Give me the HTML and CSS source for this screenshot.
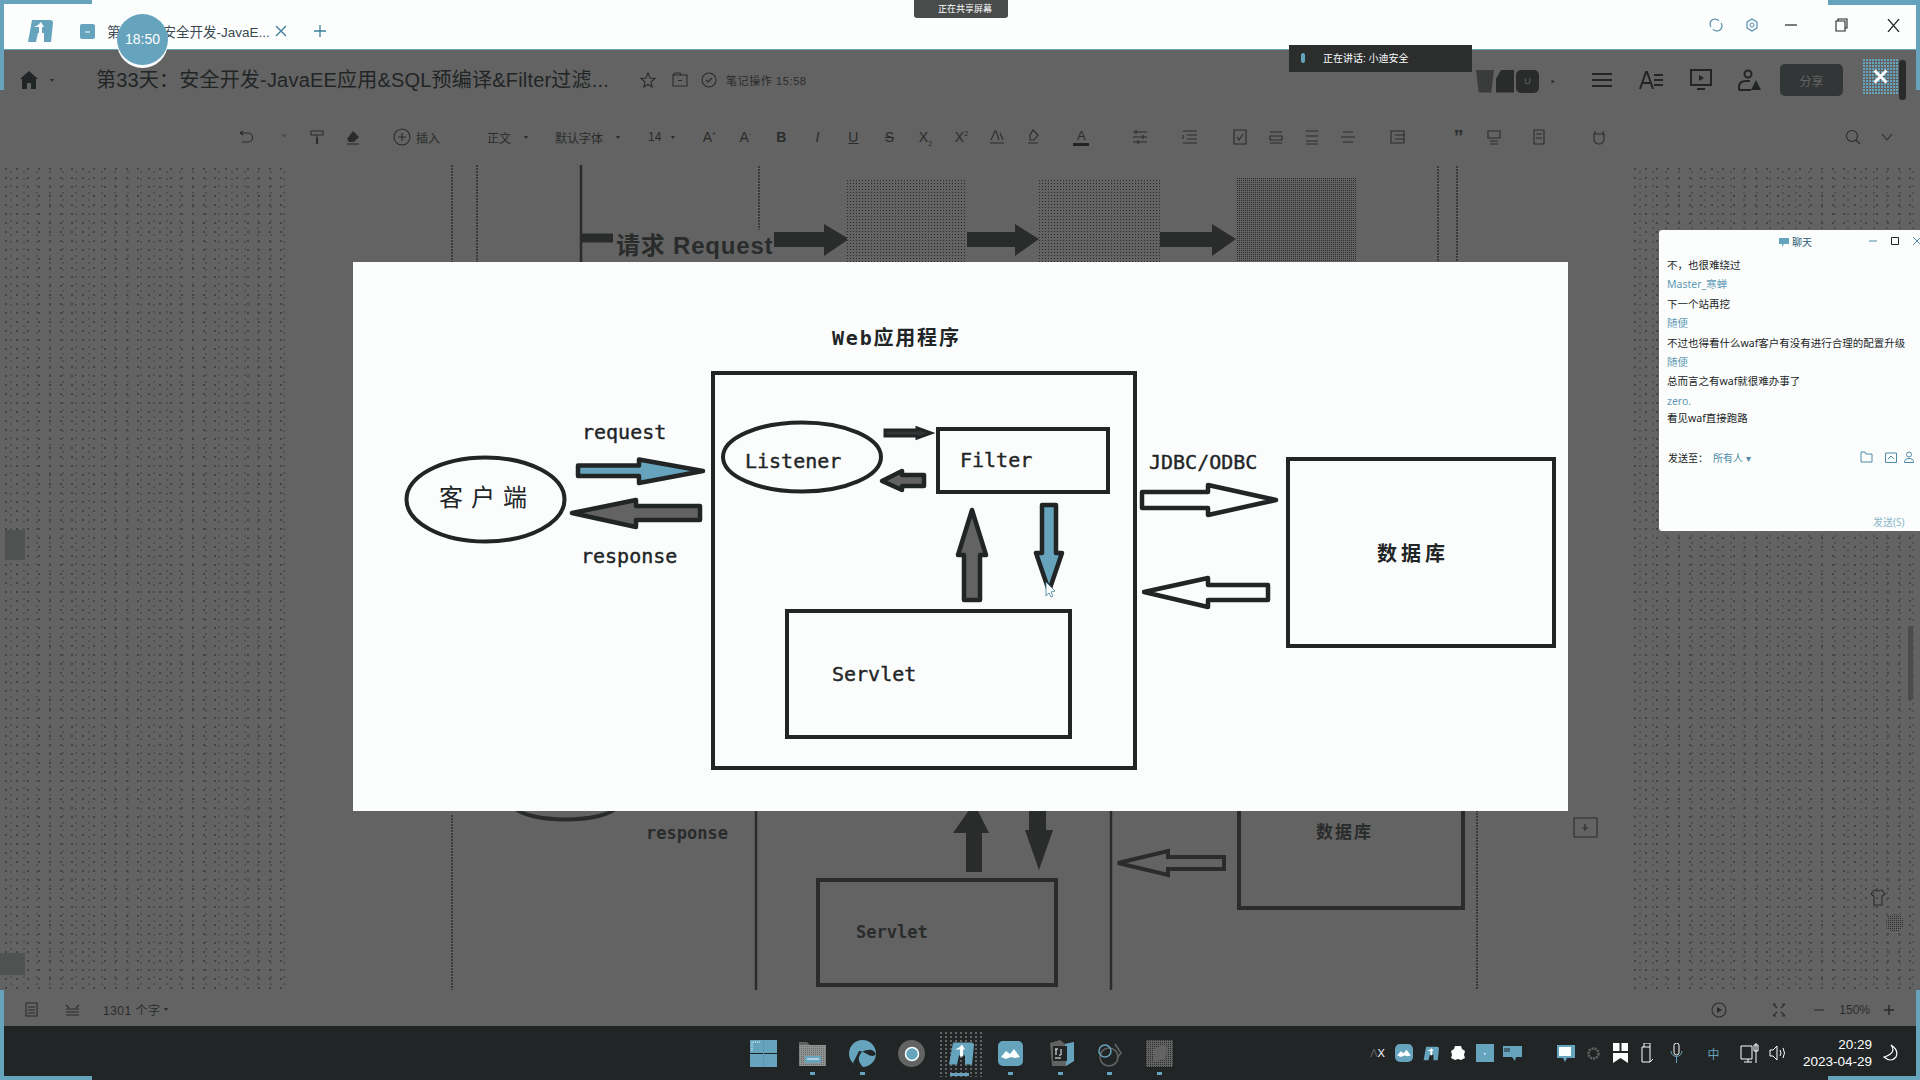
FILE: index.html
```html
<!DOCTYPE html>
<html lang="zh-CN">
<head>
<meta charset="utf-8">
<title>第33天：安全开发-JavaEE应用&amp;SQL预编译&amp;Filter过滤器</title>
<link rel="stylesheet" href="styles.css">
</head>
<body>
<svg class="defs" width="0" height="0">
  <defs>
    <symbol id="logo" viewBox="0 0 26 24">
      <path d="M5 1h18q3 0 3 3l-2 19h-7v-9h-6l-2 9H1z" fill="#66a3bd"/>
      <path d="M14 3l3 5h-2v7h-3V8H7l4-2z" fill="#fcfefe"/>
    </symbol>
    <pattern id="dith1" width="3" height="3" patternUnits="userSpaceOnUse"><rect width="3" height="3" fill="#636363"/><rect width="1" height="1" fill="#2a2c2c"/></pattern>
    <pattern id="dith2" width="2" height="2" patternUnits="userSpaceOnUse"><rect width="2" height="2" fill="#636363"/><rect width="1" height="1" fill="#2a2c2c"/></pattern>
  </defs>
</svg>
<div class="screen">
  <header class="tabbar">
    <div class="tab-group">
      <svg class="tab-logo" width="26" height="24"><use href="#logo"/></svg>
      <svg class="tab-doc" width="16" height="16" viewBox="0 0 16 16"><rect width="15" height="15" y="1" rx="2" fill="#66a3bd"/><path d="M5 9h5" stroke="#fcfefe"/></svg>
      <span class="tab-name">第33天：安全开发-JavaE...</span>
      <svg class="tab-x" width="12" height="12" viewBox="0 0 12 12"><path d="M1 1l10 10M11 1L1 11" stroke="#3f7f9b" stroke-width="1.4"/></svg>
      <svg class="tab-plus" width="12" height="12" viewBox="0 0 12 12"><path d="M6 0v12M0 6h12" stroke="#3f7f9b" stroke-width="1.3"/></svg>
    </div>
    <div class="win-ctl">
      <svg width="14" height="14" viewBox="0 0 14 14"><path d="M2 9a5 5 0 0 1 8-6M12 5a5 5 0 0 1-8 6" fill="none" stroke="#4f8ba6" stroke-width="1.2"/></svg>
      <svg width="14" height="14" viewBox="0 0 14 14"><path d="M7 1l5 3v6l-5 3-5-3V4z" fill="none" stroke="#4f8ba6" stroke-width="1.2"/><circle cx="7" cy="7" r="2" fill="none" stroke="#4f8ba6"/></svg>
      <svg class="wc-min" width="12" height="12" viewBox="0 0 12 12"><path d="M0 6h12" stroke="#222526" stroke-width="1.2"/></svg>
      <svg class="wc-max" width="13" height="14" viewBox="0 0 13 14"><path d="M1 3h9v10H1zM3 3V1h9v9h-2" fill="none" stroke="#222526" stroke-width="1.1"/></svg>
      <svg class="wc-close" width="13" height="13" viewBox="0 0 13 13"><path d="M1 0l11 13M12 0L1 13" stroke="#222526" stroke-width="1.2"/></svg>
    </div>
  </header>

  <div class="titlebar">
    <svg class="home" width="20" height="20" viewBox="0 0 20 20"><path d="M10 1l9 8h-2v10h-5v-6H8v6H3V9H1z" fill="#222526"/></svg>
    <i class="caret home-caret"></i>
    <h1 class="doc-title">第33天：安全开发-JavaEE应用&amp;SQL预编译&amp;Filter过滤...</h1>
    <svg class="t-ic first" width="18" height="18" viewBox="0 0 18 18"><path d="M9 2l2 5 5 .5-4 3.500 1.200 5L9 13.500 4.800 16l1.200-5-4-3.500L7 7z" class="ol"/></svg>
    <svg class="t-ic" width="18" height="18" viewBox="0 0 18 18"><path d="M2 4h14v11H2zM2 4l2-2h5l1 2M7 9.500h4" class="ol"/></svg>
    <svg class="t-ic t-ic3" width="18" height="18" viewBox="0 0 18 18"><circle cx="9" cy="9" r="7" class="ol"/><path d="M6 9l2 2 4-4" class="ol"/></svg>
    <span class="saved">笔记操作 15:58</span>
    <div class="avatars">
      <span class="av av1"></span><span class="av av2"></span><span class="av av3">U</span>
      <i class="caret av-caret"></i>
    </div>
    <svg class="menu-ic" width="20" height="16" viewBox="0 0 20 16"><path d="M0 2h20M0 8h20M0 14h20" stroke="#222526" stroke-width="2"/></svg>
    <svg class="ae-ic" width="24" height="20" viewBox="0 0 24 20"><path d="M1 19L7 2h1l6 17M4 13h8" fill="none" stroke="#222526" stroke-width="2"/><path d="M15 5h9M15 10h9M15 15h9" stroke="#222526" stroke-width="2"/></svg>
    <svg class="pres-ic" width="22" height="22" viewBox="0 0 22 22"><path d="M1 1h20v15H1zM7 20h8" fill="none" stroke="#222526" stroke-width="2"/><path d="M9 6l5 3-5 3z" fill="#222526"/></svg>
    <svg class="user-ic" width="24" height="22" viewBox="0 0 24 22"><circle cx="10" cy="5" r="3.500" fill="none" stroke="#222526" stroke-width="2"/><path d="M1 21v-3q0-6 7-6h4" fill="none" stroke="#222526" stroke-width="2"/><path d="M1 21h12" stroke="#222526" stroke-width="2"/><path d="M18 11l5 10h-10z" fill="#222526"/></svg>
    <button class="share-btn">分享</button>
  </div>

  <div class="fmtbar">
    <svg class="f first" viewBox="0 0 16 16"><path d="M3 4h8a3 3 0 0 1 0 9H5M3 4l3-2M3 4l3 2" class="ol"/></svg>
    <svg class="f" viewBox="0 0 16 16"><path d="M13 6h-4M13 6l-2 2" class="ol faint"/></svg>
    <svg class="f" viewBox="0 0 16 16"><path d="M2 2h12v4H2zM8 6v8" class="ol"/><path d="M7 9h2v6H7z" fill="#2a2c2c"/></svg>
    <svg class="f" viewBox="0 0 16 16"><path d="M8 2l6 6-5 5H4l-2-3z" fill="#2a2c2c"/><path d="M2 15h12" class="ol"/></svg>
    <span class="f-insert">
      <svg width="18" height="18" viewBox="0 0 18 18"><circle cx="9" cy="9" r="8" class="ol"/><path d="M9 5v8M5 9h8" class="ol"/></svg>
      <span>插入</span>
    </span>
    <span class="f-txt t-style">正文</span><i class="caret c-style"></i>
    <span class="f-txt t-font">默认字体</span><i class="caret c-font"></i>
    <span class="f-txt t-size">14</span><i class="caret c-size"></i>
    <span class="f-glyph g-a">A<sup>+</sup></span>
    <span class="f-glyph">A<sup>-</sup></span>
    <span class="f-glyph bold">B</span>
    <span class="f-glyph ital">I</span>
    <span class="f-glyph und">U</span>
    <span class="f-glyph strk">S</span>
    <span class="f-glyph">X<sub>2</sub></span>
    <span class="f-glyph">X<sup>2</sup></span>
    <svg class="f" viewBox="0 0 16 16"><path d="M2 11L6 2h1l3 9M11 4l3 7M1 14h14" class="ol"/></svg>
    <svg class="f" viewBox="0 0 16 16"><path d="M8 1l5 5-4 5H5V6zM3 14h10" class="ol"/></svg>
    <span class="f-colour">A<b></b></span>
    <svg class="f f-list" viewBox="0 0 16 16"><path d="M1 3h14M1 8h14M1 13h14M4 1v4M11 6v4M6 11v4" class="ol"/></svg>
    <svg class="f f-list2" viewBox="0 0 16 16"><path d="M1 2h14M5 6h10M5 10h10M1 14h14M1 6v4" class="ol"/></svg>
    <svg class="f f-check" viewBox="0 0 16 16"><path d="M2 1h12v14H2zM5 8l2 3 4-6" class="ol"/></svg>
    <svg class="f" viewBox="0 0 16 16"><path d="M2 3h12M2 7h12v4H2zM2 14h12" class="ol"/></svg>
    <svg class="f" viewBox="0 0 16 16"><path d="M2 2h12M2 7h12M2 12h12M2 15h12" class="ol"/></svg>
    <svg class="f" viewBox="0 0 16 16"><path d="M3 3h10M1 8h14M3 13h10" class="ol"/></svg>
    <svg class="f f-list3" viewBox="0 0 16 16"><path d="M1 2h13v12H1zM5 6h9M5 10h9" class="ol"/></svg>
    <span class="f-glyph f-quote">”</span>
    <svg class="f" viewBox="0 0 16 16"><path d="M2 2h12v7H2zM4 12h8M4 15h8" class="ol"/></svg>
    <svg class="f f-phone" viewBox="0 0 16 16"><path d="M3 1h10v14H3zM5 5h6M5 9h6" class="ol"/></svg>
    <svg class="f f-plug" viewBox="0 0 16 16"><path d="M4 2v3M12 2v3M3 5h10v5a5 5 0 0 1-10 0z" class="ol"/></svg>
    <svg class="f f-search" viewBox="0 0 16 16"><circle cx="7" cy="7" r="5.500" class="ol"/><path d="M11 11l4 4" class="ol"/></svg>
    <svg class="f f-chev" viewBox="0 0 16 16"><path d="M3 5l5 6 5-6" class="ol"/></svg>
  </div>

  <main class="doc">
    <aside class="margin"></aside>
    <svg class="page" width="1343" height="825" viewBox="290 165 1343 825">
      <g class="bg-line">
        <path d="M451 165v97M476 165v97M758 163v67M1437 163v99M1456 163v99M451 815v175M1476 810v180"/>
      </g>
      <g class="bg-line thick">
        <path d="M580 165v97M755 810v180M1110 810v180"/>
      </g>
      <path d="M580 238h32" class="bg-bar"/>
      <text x="615" y="254" class="bg-req">请求 Request</text>
      <path d="M773 232h50v-8l25 15-25 17v-9h-50z" class="bg-arrow"/>
      <path d="M966 232h48v-8l24 15-24 17v-9h-48z" class="bg-arrow"/>
      <path d="M1158 232h53v-8l24 15-24 17v-9h-53z" class="bg-arrow"/>
      <rect x="846" y="178" width="120" height="84" fill="url(#dith1)"/>
      <rect x="1038" y="178" width="121" height="84" fill="url(#dith1)"/>
      <rect x="1235" y="178" width="121" height="84" fill="url(#dith2)"/>
      <path d="M514 808a52 15 0 0 0 101 0" fill="none" stroke="#2a2c2c" stroke-width="4"/>
      <text x="645" y="839" class="bg-mono">response</text>
      <path d="M965 872V833h-13l21-30 15 30h-7v39z" fill="#2a2c2c"/>
      <path d="M1028 808h17v22h7l-14 40-14-40h4z" fill="#2a2c2c"/>
      <rect x="817" y="880" width="238" height="105" class="bg-box"/>
      <text x="855" y="938" class="bg-mono">Servlet</text>
      <path d="M1117 863l50-12v6h56v12h-56v6z" class="bg-outline"/>
      <path d="M1238 808v100h224v-100" class="bg-outline thick-out"/>
      <text x="1315" y="838" class="bg-cjk">数据库</text>
      <path d="M1573 818h23v19h-23zM1584 824v7M1581 828h6" class="ol"/>
    </svg>
    <aside class="margin right"></aside>
  </main>

  <footer class="status">
    <svg class="s-ic" width="13" height="15" viewBox="0 0 13 15"><path d="M1 1h11v13H1zM3 5h7M3 8h7M3 11h7" class="ol"/></svg>
    <svg class="s-ic s-ic2" width="15" height="13" viewBox="0 0 15 13"><path d="M1 2l3 3M14 2l-3 3M1 6h13M1 9h13M1 12h13" class="ol"/></svg>
    <span class="s-count">1301 个字</span><i class="caret c-count"></i>
    <div class="s-right">
      <svg width="16" height="16" viewBox="0 0 16 16"><circle cx="8" cy="8" r="7" class="ol"/><path d="M6 5l5 3-5 3z" fill="#2a2c2c"/></svg>
      <svg class="s-full" width="14" height="14" viewBox="0 0 14 14"><path d="M1 1l4 4M13 1L9 5M1 13l4-4M13 13L9 9M1 1h3M13 1h-3M1 13h3M13 13h-3" class="ol"/></svg>
      <svg class="s-minus" width="10" height="4" viewBox="0 0 10 4"><path d="M0 2h10" class="ol"/></svg>
      <span class="s-zoom">150%</span>
      <svg class="s-plus" width="10" height="10" viewBox="0 0 10 10"><path d="M5 0v10M0 5h10" stroke="#2a2c2c" stroke-width="1.500"/></svg>
    </div>
  </footer>

  <nav class="taskbar">
    <div class="apps">
      <span class="app"><svg width="27" height="27" viewBox="0 0 27 27"><path d="M0 0h27v27H0z" fill="#66a3bd"/><path d="M0 13.500h27" stroke="#222526"/><path d="M13.500 0v27" stroke="#5b97b0"/><path d="M2 11V2h9" fill="none" stroke="#fcfefe" stroke-dasharray="1 1"/></svg></span>
      <span class="app dot"><svg width="27" height="27" viewBox="0 0 27 27"><path d="M0 2h8l3 3h16v21H0z" fill="#636363"/><path d="M0 5h27v21H0z" fill="#fcfefe"/><path d="M0 5h27v21H0z" fill="url(#dith2)" opacity=".7"/><rect x="6" y="16" width="16" height="7" fill="#66a3bd"/><path d="M8 19h12" stroke="#fcfefe"/></svg></span>
      <span class="app dot"><svg width="27" height="27" viewBox="0 0 27 27"><circle cx="13.500" cy="13.500" r="13.500" fill="#66a3bd"/><path d="M27 14q-3-5-8-4-7 0-9 7-1 5 4 10-6 1-10-4l6-12q3 0 8 3 6 4 9 0z" fill="#222526"/></svg></span>
      <span class="app"><svg width="27" height="27" viewBox="0 0 27 27"><circle cx="13.500" cy="13.500" r="13.500" fill="#636363"/><circle cx="14" cy="14" r="6.500" fill="#66a3bd" stroke="#fcfefe" stroke-width="1.500"/></svg></span>
      <span class="app active"><svg width="26" height="25"><use href="#logo"/></svg></span>
      <span class="app dot"><svg width="25" height="25" viewBox="0 0 25 25"><rect width="25" height="25" rx="5" fill="#66a3bd"/><path d="M3 16l5-6 4 3 4-5 6 8-5 1-4-1-5 2z" fill="#fcfefe"/></svg></span>
      <span class="app dot"><svg width="27" height="27" viewBox="0 0 27 27"><path d="M3 3l10-3 5 4 9-2v19l-8 5H5z" fill="#636363"/><path d="M18 4l9-2v19l-8 5z" fill="#66a3bd"/><rect x="6" y="6" width="14" height="15" fill="#222526"/><path d="M8 9h3M14 9v6h-2M9 9v6M8 18h6" stroke="#fcfefe"/></svg></span>
      <span class="app dot"><svg width="25" height="26" viewBox="0 0 25 26"><circle cx="12" cy="16" r="9" fill="none" stroke="#636363" stroke-width="1.500"/><circle cx="8" cy="10" r="6" fill="none" stroke="#66a3bd" stroke-width="1.500"/><path d="M18 3l6 9-4 5" fill="none" stroke="#636363" stroke-width="1.500"/></svg></span>
      <span class="app dot"><svg width="27" height="27" viewBox="0 0 27 27"><rect width="27" height="27" fill="url(#dith2)"/><path d="M8 9l10-5 3 4-1 10-12 4z" fill="#636363"/></svg></span>
    </div>
    <div class="tray">
      <span class="tray-ax"><em>Λ</em>X</span>
      <span class="tr"><svg width="18" height="18" viewBox="0 0 25 25"><rect width="25" height="25" rx="7" fill="#66a3bd"/><path d="M3 16l5-6 4 3 4-5 6 8-5 1-4-1-5 2z" fill="#fcfefe"/></svg></span>
      <span class="tr"><svg width="16" height="17"><use href="#logo"/></svg></span>
      <span class="tr"><svg width="16" height="16" viewBox="0 0 16 16"><path d="M5 1h6l1 3 3 2-1 4 1 3-4 2-3-1-3 1-4-2 1-3-1-4 3-2z" fill="#fcfefe"/></svg></span>
      <span class="tr"><svg width="18" height="18" viewBox="0 0 18 18"><rect width="18" height="18" fill="#66a3bd"/><rect x="8" y="9" width="1.500" height="1.500" fill="#fcfefe"/></svg></span>
      <span class="tr"><svg width="19" height="15" viewBox="0 0 19 15"><path d="M0 0h19v11h-6l-1 4-3-4H0z" fill="#66a3bd"/><path d="M2 2v4M4 2v4M6 2v4" stroke="#222526"/></svg></span>
      <span class="tr tr-gap"><svg width="18" height="17" viewBox="0 0 18 17"><path d="M0 0h18v13h-8l-2 4-2-4H0z" fill="#66a3bd"/><rect x="2" y="2" width="12" height="9" fill="#fcfefe"/></svg></span>
      <span class="tr"><svg width="13" height="13" viewBox="0 0 13 13"><circle cx="6.500" cy="6.500" r="5" fill="none" stroke="#636363" stroke-width="2.500" stroke-dasharray="2 1"/></svg></span>
      <span class="tr"><svg width="15" height="20" viewBox="0 0 15 20"><path d="M0 0h6.500v8H0zM8.500 0H15v8H8.500zM0 10h15v10l-7.500-5L0 20z" fill="#fcfefe"/></svg></span>
      <span class="tr"><svg width="13" height="20" viewBox="0 0 13 20"><path d="M3 4V0h6v4M1 4h8v15H1zM9 19l3-3" fill="none" stroke="#fcfefe"/></svg></span>
      <span class="tr tr-w30"><svg width="13" height="20" viewBox="0 0 13 20"><rect x="4" y="0" width="5" height="12" rx="2.500" fill="none" stroke="#fcfefe"/><path d="M1 8a5.500 5.500 0 0 0 11 0M6.500 14v6" fill="none" stroke="#66a3bd"/></svg></span>
      <span class="tr tr-ime">中</span>
      <span class="tr tr-w35"><svg width="20" height="20" viewBox="0 0 20 20"><path d="M1 3h11v13H1zM4 19h8M8 16v3M16 0v20M14 2h4v6h-4z" fill="none" stroke="#fcfefe"/></svg></span>
      <span class="tr tr-vol"><svg width="18" height="16" viewBox="0 0 18 16"><path d="M1 5h3l4-4v14l-4-4H1z" fill="none" stroke="#fcfefe"/><path d="M11 5q2 3 0 6M14 3q3 5 0 10" fill="none" stroke="#fcfefe"/></svg></span>
      <div class="clock"><span>20:29</span><span>2023-04-29</span></div>
      <svg class="moon" width="15" height="18" viewBox="0 0 15 18"><path d="M8 1q6 8-7 12 7 6 12 0 3-7-5-12z" fill="none" stroke="#fcfefe" stroke-width="1.200"/></svg>
    </div>
  </nav>

  <!-- overlays -->
  <div class="timer">18:50</div>
  <div class="share-badge">正在共享屏幕</div>
  <div class="speak-badge"><i></i>正在讲话: 小迪安全</div>
  <div class="viewer-close"><svg width="15" height="15" viewBox="0 0 15 15"><path d="M1.500 1.500l12 12M13.500 1.500l-12 12" stroke="#fcfefe" stroke-width="3"/></svg></div>
  <div class="close-edge"></div>
  <div class="side-tab left-a"></div>
  <div class="side-tab left-b"></div>
  <svg class="float-shirt" width="20" height="20" viewBox="0 0 20 20"><path d="M6 2l4 1 4-1 3 4-3 2v9H6V8L3 6z" class="ol"/></svg>
  <svg class="float-ball" width="18" height="18"><circle cx="9" cy="9" r="9" fill="url(#dith2)"/></svg>
  <div class="scroll-mark"></div>

  <figure class="viewer">
    <svg width="1215" height="549" viewBox="353 262 1215 549">
      <text x="832" y="345" class="d-title">Web应用程序</text>
      <rect x="713" y="373" width="422" height="395" class="d-box"/>
      <ellipse cx="485.500" cy="499.500" rx="79" ry="42" class="d-box"/>
      <text x="439" y="506" class="d-cjk-l">客户端</text>
      <text x="582" y="439" class="d-mono">request</text>
      <text x="581" y="563" class="d-mono">response</text>
      <path d="M578 465.500h61v-6l64 11.500-64 12v-7h-61z" class="a-teal"/>
      <path d="M572 513l64-13v6h64v14h-64v7z" class="a-grey"/>
      <ellipse cx="802" cy="457" rx="79" ry="34.500" class="d-box"/>
      <text x="745" y="468" class="d-mono">Listener</text>
      <rect x="938" y="429" width="170" height="63" class="d-box"/>
      <text x="960" y="467" class="d-mono">Filter</text>
      <path d="M885 430h32v-2l14 5-14 5v-2h-32z" class="a-dark"/>
      <path d="M882 481l20-10v4h22v11h-22v4z" class="a-grey"/>
      <path d="M972 510l14 45h-6v45h-16v-45h-6z" class="a-grey"/>
      <path d="M1042 505h14v48h6l-13 38-13-38h6z" class="a-teal"/>
      <path d="M1046 582l0 14 3-3 2 4 2-1-2-4 4-1z" fill="#fcfefe" stroke="#3f7f9b" stroke-width=".8"/>
      <rect x="787" y="611" width="283" height="126" class="d-box"/>
      <text x="832" y="681" class="d-mono">Servlet</text>
      <text x="1149" y="469" class="d-mono">JDBC/ODBC</text>
      <path d="M1142 492h66v-7l68 15-68 15v-7h-66z" class="a-white"/>
      <path d="M1144 592l64-14v7h60v15h-60v7z" class="a-white"/>
      <rect x="1288" y="459" width="266" height="187" class="d-box"/>
      <text x="1377" y="561" class="d-cjk">数据库</text>
    </svg>
  </figure>

  <section class="chat">
    <div class="chat-head">
      <svg width="10" height="10" viewBox="0 0 10 10"><path d="M0 1h10v6H5l-2 3V7H0z" fill="#66a3bd"/></svg>
      <span>聊天</span>
      <div class="chat-ctl">
        <svg width="8" height="8" viewBox="0 0 8 8"><path d="M0 4h8" stroke="#4f8ba6"/></svg>
        <svg width="8" height="8" viewBox="0 0 8 8"><path d="M.5.500h7v7h-7z" fill="none" stroke="#222526"/></svg>
        <svg width="8" height="8" viewBox="0 0 8 8"><path d="M0 0l8 8M8 0L0 8" stroke="#4f8ba6"/></svg>
      </div>
    </div>
    <ul class="chat-log">
      <li>不，也很难绕过</li>
      <li class="who">Master_寒蝉</li>
      <li>下一个站再挖</li>
      <li class="who">随便</li>
      <li>不过也得看什么waf客户有没有进行合理的配置升级</li>
      <li class="who">随便</li>
      <li>总而言之有waf就很难办事了</li>
      <li class="who">zero.</li>
      <li class="last">看见waf直接跑路</li>
    </ul>
    <div class="chat-send">
      <span>发送至：</span><span class="to">所有人 ▾</span>
      <div class="send-ic">
        <svg width="13" height="12" viewBox="0 0 13 12"><path d="M1 1h4l1 2h6v8H1z" fill="none" stroke="#4f8ba6"/></svg>
        <svg class="send-2" width="12" height="12" viewBox="0 0 12 12"><path d="M.5 2h11v9.500H.5zM3 8l3-3 3 3" fill="none" stroke="#4f8ba6"/></svg>
        <svg class="send-3" width="10" height="12" viewBox="0 0 10 12"><circle cx="5" cy="3.500" r="2.500" fill="none" stroke="#4f8ba6"/><path d="M.5 11.500q0-4 4.500-4t4.500 4z" fill="none" stroke="#4f8ba6"/></svg>
      </div>
    </div>
    <div class="chat-submit">发送(S)</div>
  </section>

  <i class="corner tl"></i><i class="corner tr-c"></i><i class="corner bl"></i><i class="corner br"></i>
</div>
</body>
</html>
```
FILE: styles.css
```css
* { box-sizing: border-box; }
html, body { margin: 0; padding: 0; background: #636363; }
.defs { position: absolute; }
.screen {
  position: relative;
  width: 1920px;
  height: 1080px;
  overflow: hidden;
  display: flex;
  flex-direction: column;
  background: #636363;
  font-family: "Liberation Sans", "Noto Sans CJK SC", sans-serif;
  color: #2a2c2c;
}
.ol { fill: none; stroke: #2a2c2c; stroke-width: 1.1; }
.ol.faint { stroke: #444; }
.caret { display: block; width: 0; height: 0; border-left: 2.5px solid transparent; border-right: 2.5px solid transparent; border-top: 3px solid #2a2c2c; }

/* tab bar */
.tabbar {
  flex: 0 0 50px;
  display: flex;
  align-items: center;
  background: #fcfefe;
  border-bottom: 1px solid #66a3bd;
  padding-left: 27px;
  padding-top: 1px;
}
.tab-group { display: flex; align-items: center; padding-top: 12px; }
.tab-logo { flex: none; }
.tab-doc { margin-left: 27px; flex: none; }
.tab-name { margin-left: 11px; width: 161px; font-size: 13.500px; color: #3a4a50; white-space: nowrap; }
.tab-x { margin-left: 7px; }
.tab-plus { margin-left: 27px; }
.win-ctl { margin-left: auto; display: flex; align-items: center; padding-right: 20px; }
.win-ctl svg { margin-left: 22px; }
.wc-min { margin-left: 26px !important; }
.wc-max { margin-left: 38px !important; }
.wc-close { margin-left: 39px !important; }

/* title bar */
.titlebar { flex: 0 0 62px; display: flex; align-items: center; padding: 0 0 2px 19px; }
.home-caret { margin-left: 11px; }
.doc-title { margin: 0 0 0 42px; font-size: 20px; font-weight: 400; letter-spacing: .2px; color: #222526; white-space: nowrap; line-height: 28px; width: 543px; }
.t-ic { margin-left: 14px; flex: none; }
.t-ic.first { margin-left: 0; }
.t-ic3 { margin-left: 11px; }
.saved { margin-left: 8px; font-size: 11px; letter-spacing: .6px; color: #2a2c2c; white-space: nowrap; width: 92px; }
.avatars { margin-left: 658px; display: flex; align-items: center; gap: 2px; padding-top: 2px; }
.av { display: block; width: 18px; height: 23px; background: #2a2c2c; }
.av1 { clip-path: polygon(0 0, 100% 0, 85% 100%, 15% 100%); background: #3a3c3c; }
.av2 { clip-path: polygon(30% 0, 100% 0, 100% 100%, 0 100%, 0 40%); }
.av3 { width: 23px; border-radius: 5px; font-size: 9px; text-align: center; line-height: 23px; color: #636363; }
.av-caret { margin-left: 10px; transform: rotate(-90deg); }
.menu-ic { margin-left: 37px; flex: none; }
.ae-ic { margin-left: 27px; flex: none; }
.pres-ic { margin-left: 27px; flex: none; }
.user-ic { margin-left: 26px; flex: none; }
.share-btn {
  margin-left: 18px; width: 63px; height: 32px;
  border: 0; border-radius: 5px; background: #333636;
  font: 12px "Liberation Sans", "Noto Sans CJK SC", sans-serif; color: #636363;
}

/* format bar */
.fmtbar { flex: 0 0 53px; display: flex; align-items: center; padding: 0 0 3px 237px; font-size: 12px; white-space: nowrap; }
.f { width: 16px; height: 16px; flex: none; margin-left: 20px; }
.f.first { margin-left: 0; }
.f-insert { margin-left: 32px; display: flex; align-items: center; gap: 5px; }
.f-txt { display: block; color: #2a2c2c; }
.t-style { margin-left: 47px; }
.c-style { margin-left: 13px; }
.t-font { margin-left: 27px; }
.c-font { margin-left: 13px; }
.t-size { margin-left: 28px; }
.c-size { margin-left: 10px; }
.f-glyph { flex: none; width: 16px; margin-left: 20px; text-align: center; font-size: 14px; line-height: 16px; }
.g-a { margin-left: 26px; }
.f-glyph sup, .f-glyph sub { font-size: 7px; line-height: 0; }
.bold { font-weight: 700; }
.ital { font-style: italic; }
.und { text-decoration: underline; }
.strk { text-decoration: line-through; }
.f-colour { margin-left: 32px; width: 16px; text-align: center; font-size: 13px; line-height: 14px; }
.f-colour b { display: block; height: 3px; background: #222526; }
.f-list { margin-left: 43px; }
.f-list2 { margin-left: 34px; }
.f-check { margin-left: 34px; }
.f-list3 { margin-left: 34px; }
.f-quote { margin-left: 44px; font-size: 20px; font-weight: 700; }
.f-phone { margin-left: 29px; }
.f-plug { margin-left: 44px; }
.f-search { margin-left: 238px; }
.f-chev { margin-left: 18px; }

/* document */
.doc { flex: 1 1 0; min-height: 0; display: flex; }
.margin {
  margin-left: 5px;
  margin-top: 3px;
  flex: 1 1 0;
  background-image:
    radial-gradient(circle at 1px 1px, #434545 0.8px, transparent 1px),
    radial-gradient(circle at 1px 1px, #505252 0.8px, transparent 1px);
  background-size: 11px 9px, 13px 7px;
  background-position: 0 0, 5px 3px;
}
.margin.right { margin-left: 0; }
.page { flex: none; display: block; }
.bg-line path { fill: none; stroke: #3a3c3c; stroke-width: 2; stroke-dasharray: 2 1; }
.bg-line.thick path { stroke: #2a2c2c; stroke-width: 2.500; stroke-dasharray: none; }
.bg-bar { stroke: #2a2c2c; stroke-width: 9; fill: none; }
.bg-arrow { fill: #2a2c2c; }
.bg-req { font: 700 24px "Liberation Sans", "Noto Sans CJK SC", sans-serif; letter-spacing: .8px; fill: #2a2c2c; }
.bg-mono { font: 700 17px "DejaVu Sans Mono", monospace; fill: #2a2c2c; }
.bg-cjk { font: 700 17px "Noto Sans CJK SC", sans-serif; fill: #2a2c2c; letter-spacing: 2px; }
.bg-box { fill: none; stroke: #2a2c2c; stroke-width: 4; }
.bg-outline { fill: none; stroke: #2a2c2c; stroke-width: 4; }

/* status */
.status { flex: 0 0 36px; display: flex; align-items: center; padding: 3px 0 0 25px; font-size: 11px; }
.s-ic2 { margin-left: 27px; }
.s-count { margin-left: 23px; font-size: 12px; letter-spacing: .5px; color: #2a2c2c; }
.c-count { margin-left: 3px; }
.s-right { margin-left: auto; display: flex; align-items: center; padding-right: 26px; }
.s-full { margin-left: 45px; }
.s-minus { margin-left: 28px; }
.s-zoom { margin-left: 15px; font-size: 12px; }
.s-plus { margin-left: 14px; }

/* taskbar */
.taskbar { flex: 0 0 54px; display: flex; background: #222526; color: #fcfefe; }
.apps { margin-left: 738.500px; display: flex; }
.app { position: relative; width: 49.500px; height: 54px; display: flex; align-items: center; justify-content: center; padding-top: 1px; }
.app svg { position: relative; }
.app.dot::after { content: ""; position: absolute; left: 22px; bottom: 5px; width: 5px; height: 3px; background: #66a3bd; }
.app.active::before {
  content: ""; position: absolute; left: 3px; right: 3px; top: 6px; bottom: 3px;
  background-image: radial-gradient(circle at 1px 1px, #636363 0.8px, transparent 1px);
  background-size: 5px 4px;
}
.app.active::after { content: ""; position: absolute; left: 13px; bottom: 4px; width: 19px; height: 3px; background: #66a3bd; }
.tray { position: absolute; right: 0; bottom: 0; height: 54px; display: flex; align-items: center; padding-right: 22px; }
.tray-ax { font-size: 11px; margin-right: 6px; }
.tray-ax em { font-style: normal; color: #636363; }
.tr { width: 27px; display: flex; justify-content: center; align-items: center; flex: none; }
.tr-gap { margin-left: 27px; }
.tr-w30 { width: 31px; }
.tr-ime { width: 43px; color: #66a3bd; font-size: 12px; }
.tr-w35 { width: 31px; }
.tr-vol { width: 25px; }
.clock { margin-left: 12px; display: flex; flex-direction: column; align-items: flex-end; font-size: 13.500px; line-height: 17px; color: #fcfefe; }
.moon { margin-left: 11px; }

/* overlays */
.timer {
  position: absolute; left: 117px; top: 14px; width: 51px; height: 51px;
  border-radius: 50%; background: #66a3bd; color: #fcfefe;
  box-shadow: 0 3px 0 #fcfefe; font-size: 14px; line-height: 51px; text-align: center;
}
.share-badge {
  position: absolute; left: 914px; top: 0; width: 94px; height: 18px;
  background: #4a4c4c; color: #fcfefe; font-size: 9px; line-height: 18px; text-align: center;
  border-radius: 0 0 3px 3px;
  padding-left: 8px;
}
.speak-badge {
  position: absolute; left: 1289px; top: 45px; width: 183px; height: 27px;
  background: #2c2e2e; color: #fcfefe; font-size: 10px; line-height: 27px; padding-left: 34px;
}
.speak-badge i { position: absolute; left: 12px; top: 8px; width: 4px; height: 10px; border-radius: 2px; background: #66a3bd; }
.viewer-close {
  position: absolute; left: 1863px; top: 59px; width: 35px; height: 35px;
  display: flex; align-items: center; justify-content: center;
  background: #636363;
  background-image: radial-gradient(circle at 1px 1px, #66a3bd 0.9px, transparent 1px);
  background-size: 3px 3px;
}
.close-edge { position: absolute; left: 1899px; top: 60px; width: 7px; height: 40px; background: #2a2c2c; border-radius: 3px; }
.side-tab { position: absolute; left: 5px; width: 20px; background: #505252; }
.left-a { top: 530px; height: 30px; }
.left-b { top: 953px; height: 22px; left: 0; width: 25px; }
.float-shirt { position: absolute; left: 1868px; top: 888px; }
.float-ball { position: absolute; left: 1886px; top: 914px; }
.scroll-mark { position: absolute; left: 1908px; top: 626px; width: 5px; height: 74px; background: #4a4c4c; border-radius: 2px; }
.viewer { position: absolute; left: 353px; top: 262px; width: 1215px; height: 549px; margin: 0; background: #fbfdfd; }
.viewer svg { display: block; }
.d-box { fill: none; stroke: #222526; stroke-width: 4; }
.d-title { font: 700 20px "DejaVu Sans Mono", "Noto Sans CJK SC", monospace; letter-spacing: 1.800px; fill: #222526; }
.d-mono { font: 400 20px "DejaVu Sans Mono", monospace; stroke: #222526; stroke-width: .4; fill: #222526; }
.d-cjk { font: 700 20px "Noto Sans CJK SC", sans-serif; fill: #222526; letter-spacing: 4px; }
.d-cjk-l { font: 400 24px "Noto Sans CJK SC", sans-serif; fill: #222526; letter-spacing: 8px; }
.a-teal { fill: #66a3bd; stroke: #222526; stroke-width: 4.500; stroke-linejoin: round; }
.a-grey { fill: #636363; stroke: #222526; stroke-width: 4.500; stroke-linejoin: round; }
.a-dark { fill: #333636; stroke: #222526; stroke-width: 3; }
.a-white { fill: #fbfdfd; stroke: #222526; stroke-width: 4.500; stroke-linejoin: round; }

/* chat */
.chat {
  position: absolute; left: 1659px; top: 230px; width: 261px; height: 301px;
  background: #fbfdfd; border-radius: 3px 0 0 3px;
  font-family: "Noto Sans", "Noto Sans CJK SC", sans-serif; font-size: 10.500px; color: #222526;
}
.chat-head { position: relative; height: 23px; display: flex; align-items: center; gap: 3px; padding-left: 120px; }
.chat-head span { color: #2f5f75; font-size: 10px; }
.chat-ctl { position: absolute; left: 210px; top: 7px; display: flex; gap: 14px; }
.chat-log { list-style: none; margin: 3px 0 0; padding: 0 0 0 8px; }
.chat-log li { height: 19.400px; line-height: 19.400px; white-space: nowrap; }
.chat-log .who { color: #5f9ab4; }
.chat-log .last { margin-top: -2px; }
.chat-send { position: relative; margin-top: 19px; padding-left: 9px; display: flex; height: 20px; align-items: center; font-size: 10px; }
.to { margin-left: 5px; color: #4f8ba6; }
.send-ic { position: absolute; left: 201px; top: 3px; display: flex; }
.send-2 { margin-left: 12px; }
.send-3 { margin-left: 7px; }
.chat-submit { position: absolute; left: 214px; top: 284px; font-size: 10px; color: #8ab6c9; }

/* screen-share frame */
.corner { position: absolute; width: 92px; height: 90px; z-index: 5; border: 0 solid #66a3bd; }
.tl { left: 0; top: 0; border-width: 4px 0 0 4px; }
.tr-c { right: 0; top: 0; border-width: 5px 4px 0 0; }
.bl { left: 0; bottom: 0; border-width: 0 0 4px 4px; }
.br { right: 0; bottom: 0; border-width: 0 4px 4px 0; }
```
